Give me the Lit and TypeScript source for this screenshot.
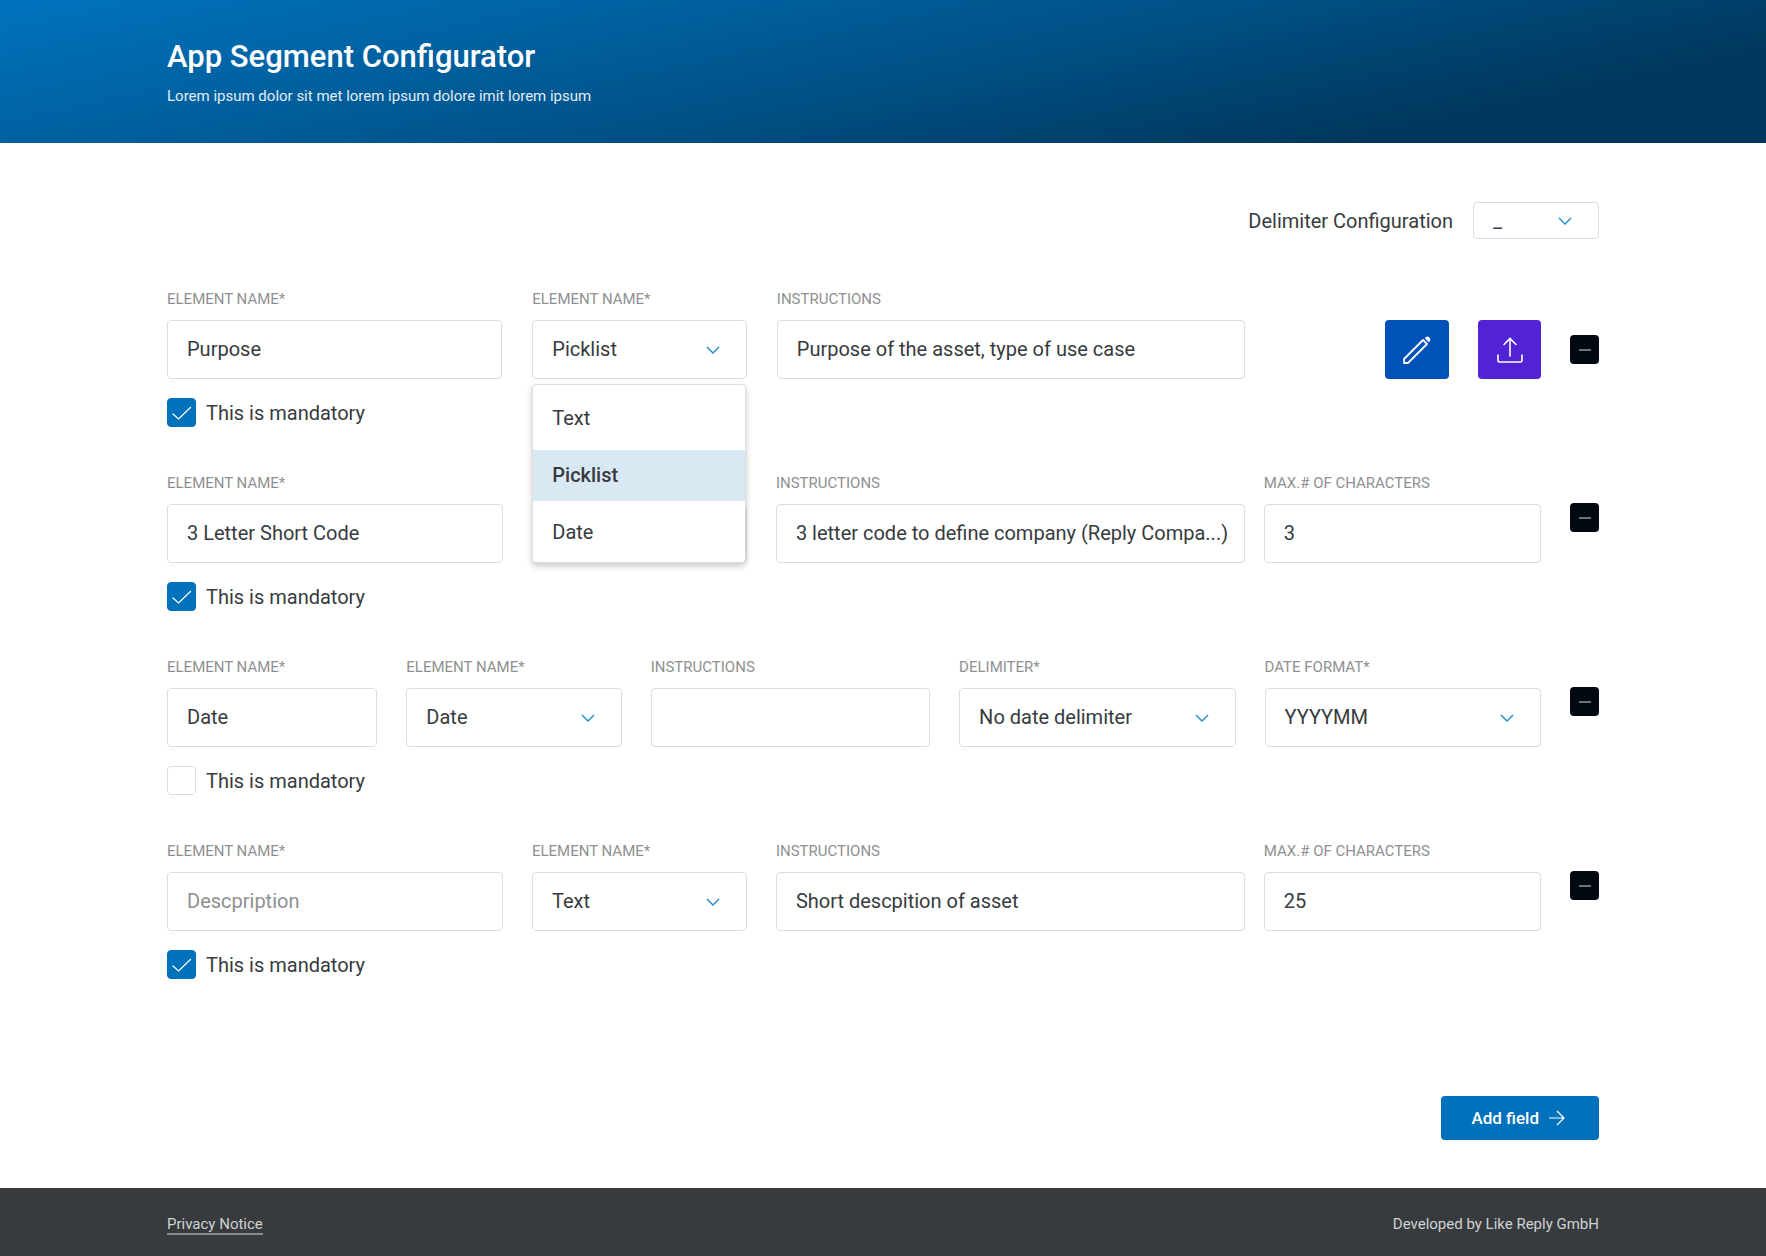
import { LitElement, html, css, svg, nothing } from "lit";
import { customElement, state } from "lit/decorators.js";
import { classMap } from "lit/directives/class-map.js";

interface Field {
  kind: "input" | "select";
  label: string;
  value?: string;
  placeholder?: string;
  options?: string[];
  open?: boolean;
  covered?: boolean;
}

interface Row {
  layout: "pick" | "text" | "date";
  mandatory: boolean;
  fields: Field[];
  side?: Field;
}

const TYPES = ["Text", "Picklist", "Date"];

const ROWS: Row[] = [
  {
    layout: "pick",
    mandatory: true,
    fields: [
      { kind: "input", label: "Element name*", value: "Purpose" },
      { kind: "select", label: "Element name*", value: "Picklist", options: TYPES, open: true },
      { kind: "input", label: "Instructions", value: "Purpose of the asset, type of use case" },
    ],
  },
  {
    layout: "text",
    mandatory: true,
    fields: [
      { kind: "input", label: "Element name*", value: "3 Letter Short Code" },
      { kind: "select", label: "Element name*", value: "Text", options: TYPES, covered: true },
      { kind: "input", label: "Instructions", value: "3 letter code to define company (Reply Compa...)" },
    ],
    side: { kind: "input", label: "Max.# of characters", value: "3" },
  },
  {
    layout: "date",
    mandatory: false,
    fields: [
      { kind: "input", label: "Element name*", value: "Date" },
      { kind: "select", label: "Element name*", value: "Date", options: TYPES },
      { kind: "input", label: "Instructions", value: "" },
      { kind: "select", label: "Delimiter*", value: "No date delimiter", options: ["No date delimiter"] },
      { kind: "select", label: "Date format*", value: "YYYYMM", options: ["YYYYMM"] },
    ],
  },
  {
    layout: "text",
    mandatory: true,
    fields: [
      { kind: "input", label: "Element name*", placeholder: "Descpription" },
      { kind: "select", label: "Element name*", value: "Text", options: TYPES },
      { kind: "input", label: "Instructions", value: "Short descpition of asset" },
    ],
    side: { kind: "input", label: "Max.# of characters", value: "25" },
  },
];

const chevron = html`<svg class="chevron" width="14" height="8" viewBox="0 0 14 8" aria-hidden="true">
  ${svg`<path d="M1 1l6 6 6-6" fill="none" stroke="#2b8fd0" stroke-width="1.5" />`}
</svg>`;

const pencil = html`<svg width="30" height="30" viewBox="0 0 30 30" aria-hidden="true">
  ${svg`<path d="M2 28v-4L21 5l4 4L6 28z" fill="none" stroke="#fff" stroke-width="1.8" stroke-linejoin="round" />
  <path d="M22.800 3.200l1-1q1.600-1.300 3.200 0l.8.800q1.300 1.600 0 3.200l-1 1z" fill="#fff" />`}
</svg>`;

const upload = html`<svg width="26" height="26" viewBox="0 0 26 26" aria-hidden="true">
  ${svg`<g fill="none" stroke="#fff" stroke-width="1.6" stroke-linecap="round">
    <path d="M13 19V1.500M7 7.500l6-6 6 6" />
    <path d="M1 18v5.500q0 1.500 1.500 1.500h21q1.500 0 1.500-1.500V18" />
  </g>`}
</svg>`;

@customElement("app-root")
export class AppRoot extends LitElement {
  static styles = css`
    :host {
      display: flex;
      flex-direction: column;
      min-height: 100vh;
      background: #fff;
      color: #373b3e;
      font-family: Roboto, "Liberation Sans", sans-serif;
      font-size: 20px;
      line-height: 24px;
    }
    *, *::before, *::after { box-sizing: border-box; }
    .header {
      padding: 40px 167px 37px;
      color: #fff;
      background: linear-gradient(168deg, #0072bc 2%, #005288 50%, #00365b 84%);
    }
    .title { margin: 0; font-size: 31px; line-height: 34px; font-weight: 500; }
    .subtitle { margin: 12px 0 0; font-size: 15px; line-height: 20px; color: #e2edf5; }
    .main { flex: 1; display: flex; flex-direction: column; padding: 59px 167px 48px; }
    .config { display: flex; justify-content: flex-end; align-items: center; gap: 20px; margin-bottom: 52px; }
    .rows { display: flex; flex-direction: column; gap: 48px; }
    .row { display: flex; align-items: flex-start; }
    .group { display: grid; flex: 1077 1 0; column-gap: 29px; min-width: 0; }
    .pick, .text { grid-template-columns: 336fr 215fr 469fr; }
    .pick { column-gap: 30px; }
    .date { flex-grow: 1; grid-template-columns: 210fr 215fr 279fr 276fr 276fr; }
    .side { flex: 277 1 0; min-width: 0; margin-left: 19px; }
    .actions { display: flex; justify-content: flex-end; gap: 29px; padding-top: 29px; }
    .field { position: relative; display: flex; flex-direction: column; gap: 13px; min-width: 0; }
    .label { font-size: 15px; line-height: 16px; text-transform: uppercase; color: #8f9091; }
    .covered { visibility: hidden; }
    .control {
      width: 100%;
      height: 59px;
      margin: 0;
      padding: 0 8px 2px 19px;
      border: 1px solid #dcddde;
      border-radius: 4px;
      background: #fff;
      color: inherit;
      font: inherit;
      appearance: none;
    }
    .control::placeholder { color: #8f9091; opacity: 1; }
    .select { display: grid; align-items: center; }
    .select > * { grid-area: 1 / 1; }
    .chevron { justify-self: end; margin-right: 27px; pointer-events: none; }
    .compact { width: 126px; }
    .compact .control { height: 37px; }
    .menu {
      position: absolute;
      z-index: 2;
      top: 100%;
      left: 0;
      right: 1px;
      display: flex;
      flex-direction: column;
      gap: 6px;
      margin: 5px 0 0;
      padding: 8px 0 4px;
      list-style: none;
      border: 1px solid #dcddde;
      border-radius: 4px;
      background: #fff;
      box-shadow: 0 3px 6px rgba(0, 0, 0, 0.22);
    }
    .option { padding: 0 19px; line-height: 51px; }
    .chosen { background: #d9e9f4; font-weight: 500; }
    .mandatory { display: flex; align-items: center; gap: 10px; width: fit-content; height: 29px; margin-top: 19px; }
    .check { display: grid; width: 29px; height: 29px; }
    .check > * { grid-area: 1 / 1; }
    .tick { pointer-events: none; }
    .box {
      width: 29px;
      height: 29px;
      margin: 0;
      border: 1px solid #dcddde;
      border-radius: 4px;
      background: #fff;
      appearance: none;
    }
    .box:checked { border-color: #0071bb; background: #0071bb; }
    .button {
      display: flex;
      align-items: center;
      justify-content: center;
      padding: 0;
      border: 0;
      border-radius: 4px;
      color: #fff;
      font: inherit;
      cursor: pointer;
    }
    .edit { width: 64px; height: 59px; background: #0052b8; }
    .upload { width: 63px; height: 59px; background: #5222d5; }
    .remove { flex: none; width: 29px; height: 29px; margin: 28px 0 0 29px; background: #02080f; }
    .middle { margin-top: 44px; }
    .add {
      align-self: flex-end;
      gap: 10px;
      height: 44px;
      margin-top: auto;
      padding: 0 34px 0 30px;
      background: #0071bb;
      font-size: 17px;
      font-weight: 500;
    }
    .footer {
      display: flex;
      align-items: baseline;
      justify-content: space-between;
      height: 68px;
      padding: 27px 167px 0;
      background: #373b3e;
      color: #d0d2d3;
      font-size: 15px;
      line-height: 18px;
    }
    .link { color: inherit; text-decoration: none; border-bottom: 2px solid #898c8e; }
  `;

  @state() private rows = ROWS;

  private renderSelect(id: string, value: string, options: string[]) {
    return html`<select class="control" id=${id}>
        ${options.map((o) => html`<option ?selected=${o === value}>${o}</option>`)}
      </select>
      ${chevron}`;
  }

  private renderField(f: Field, id: string) {
    return html`<div class="field">
      <label class=${classMap({ label: true, covered: !!f.covered })} for=${id}>${f.label}</label>
      ${f.kind === "select"
        ? html`<div class="select">${this.renderSelect(id, f.value ?? "", f.options ?? [])}</div>`
        : html`<input class="control" id=${id} type="text" .value=${f.value ?? ""} placeholder=${f.placeholder ?? ""} />`}
      ${f.open
        ? html`<ul class="menu" role="listbox">
            ${f.options!.map(
              (o) => html`<li
                class=${classMap({ option: true, chosen: o === f.value })}
                role="option"
                aria-selected=${o === f.value}
              >${o}</li>`
            )}
          </ul>`
        : nothing}
    </div>`;
  }

  private renderRow(row: Row, i: number) {
    const pick = row.layout === "pick";
    return html`<div>
      <div class="row">
        <div class="group ${row.layout}">
          ${row.fields.map((f, j) => this.renderField(f, `field-${i}-${j}`))}
        </div>
        ${row.side ? html`<div class="side">${this.renderField(row.side, `side-${i}`)}</div>` : nothing}
        ${pick
          ? html`<div class="side actions">
              <button class="button edit" type="button" aria-label="Edit">${pencil}</button>
              <button class="button upload" type="button" aria-label="Upload">${upload}</button>
            </div>`
          : nothing}
        <button class=${classMap({ button: true, remove: true, middle: pick })} type="button" aria-label="Remove">
          <svg width="12" height="2" viewBox="0 0 12 2" aria-hidden="true"><rect width="12" height="2" fill="#707376" /></svg>
        </button>
      </div>
      <label class="mandatory">
        <span class="check">
          <input class="box" type="checkbox" .checked=${row.mandatory} />
          ${row.mandatory
            ? html`<svg class="tick" width="29" height="29" viewBox="0 0 29 29" aria-hidden="true">
                <path d="M5.500 15.500l6 5.500L24 9" fill="none" stroke="#fff" stroke-width="1.200" />
              </svg>`
            : nothing}
        </span>
        This is mandatory
      </label>
    </div>`;
  }

  render() {
    return html`
      <header class="header">
        <h1 class="title">App Segment Configurator</h1>
        <p class="subtitle">Lorem ipsum dolor sit met lorem ipsum dolore imit lorem ipsum</p>
      </header>
      <main class="main">
        <div class="config">
          <label for="delimiter">Delimiter Configuration</label>
          <div class="select compact">${this.renderSelect("delimiter", "_", ["_", "-"])}</div>
        </div>
        <div class="rows">${this.rows.map((r, i) => this.renderRow(r, i))}</div>
        <button class="button add" type="button">
          Add field
          <svg width="16" height="16" viewBox="0 0 16 16" aria-hidden="true">
            <path d="M0 8h15M8 1l7 7-7 7" fill="none" stroke="#fff" stroke-width="1.200" />
          </svg>
        </button>
      </main>
      <footer class="footer">
        <a class="link" href="#privacy">Privacy Notice</a>
        <span>Developed by Like Reply GmbH</span>
      </footer>
    `;
  }
}
